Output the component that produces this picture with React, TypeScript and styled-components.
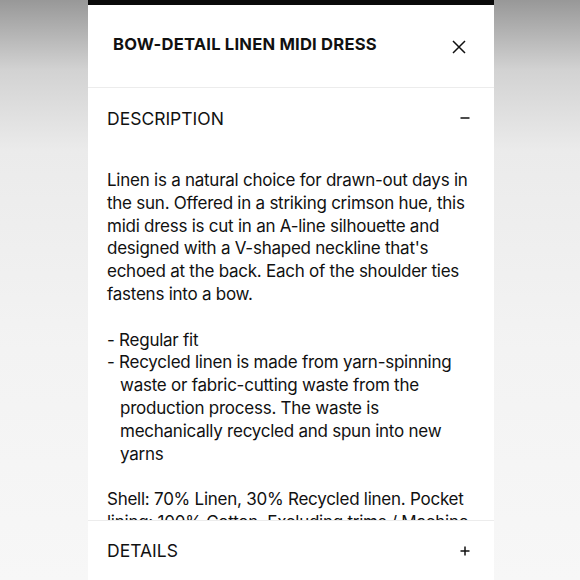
import React from "react";
import styled, { createGlobalStyle } from "styled-components";

const Global = createGlobalStyle`
  html, body { margin: 0; padding: 0; }
  body { font-family: Inter, "Noto Sans", sans-serif; color: #111; }
`;

const Page = styled.div`
  width: 580px;
  height: 580px;
  display: flex;
  justify-content: center;
  background: linear-gradient(180deg, #989898 0%, #d2d2d2 12%, #ebebeb 26%, #f3f3f3 60%, #f7f7f7 100%);
  overflow: hidden;
`;

const Panel = styled.div`
  width: 406px;
  margin-left: 2px;
  height: 580px;
  background: #fff;
  display: flex;
  flex-direction: column;
`;

const TopBar = styled.div`
  height: 5px;
  background: #0a0a0a;
  flex-shrink: 0;
`;

const Header = styled.div`
  height: 83px;
  flex-shrink: 0;
  display: flex;
  align-items: center;
  justify-content: space-between;
  padding: 0 28px 4px 25px;
  border-bottom: 1px solid #ececec;
  box-sizing: border-box;
`;

const Title = styled.h1`
  margin: 0;
  font-size: 16.6px;
  font-weight: 700;
  letter-spacing: 0.2px;
  color: #111;
`;

const IconButton = styled.button`
  border: 0;
  background: none;
  padding: 0;
  width: 14px;
  height: 14px;
  display: flex;
  align-items: center;
  justify-content: center;
  margin-top: 6px;
`;

const SectionHeader = styled.div<{ $border?: boolean }>`
  height: 60px;
  flex-shrink: 0;
  display: flex;
  align-items: center;
  justify-content: space-between;
  padding: 0 24px 0 19px;
  box-sizing: border-box;
  ${(p) => (p.$border ? "border-top: 1px solid #ececec;" : "")}
`;

const SectionTitle = styled.span`
  font-size: 17.5px;
  font-weight: 400;
  letter-spacing: 0;
  color: #111;
`;

const Body = styled.div`
  flex: 1;
  min-height: 0;
  overflow: hidden;
  padding: 21px 19px 0 19px;
  font-size: 17px;
  line-height: 22.8px;
  letter-spacing: -0.25px;
  color: #111;
`;

const Line = styled.div<{ $indent?: boolean }>`
  white-space: nowrap;
  padding-left: ${(p) => (p.$indent ? "13px" : "0")};
`;

const Gap = styled.div`
  height: 22.8px;
`;

const X = () => (
  <svg width="14" height="14" viewBox="0 0 14 14">
    <path d="M1 1 L13 13 M13 1 L1 13" stroke="#111" strokeWidth="1.5" fill="none" />
  </svg>
);
const Minus = () => (
  <svg width="10" height="10" viewBox="0 0 10 10">
    <path d="M0.5 5 H9.5" stroke="#111" strokeWidth="1.5" fill="none" />
  </svg>
);
const Plus = () => (
  <svg width="10" height="10" viewBox="0 0 10 10">
    <path d="M0.5 5 H9.5 M5 0.5 V9.5" stroke="#111" strokeWidth="1.5" fill="none" />
  </svg>
);

export default function App() {
  return (
    <>
      <Global />
      <Page>
        <Panel>
          <TopBar />
          <Header>
            <Title>BOW-DETAIL LINEN MIDI DRESS</Title>
            <IconButton aria-label="Close"><X /></IconButton>
          </Header>
          <SectionHeader>
            <SectionTitle>DESCRIPTION</SectionTitle>
            <Minus />
          </SectionHeader>
          <Body>
            <Line>Linen is a natural choice for drawn-out days in</Line>
            <Line>the sun. Offered in a striking crimson hue, this</Line>
            <Line>midi dress is cut in an A-line silhouette and</Line>
            <Line>designed with a V-shaped neckline that's</Line>
            <Line>echoed at the back. Each of the shoulder ties</Line>
            <Line>fastens into a bow.</Line>
            <Gap />
            <Line>- Regular fit</Line>
            <Line>- Recycled linen is made from yarn-spinning</Line>
            <Line $indent>waste or fabric-cutting waste from the</Line>
            <Line $indent>production process. The waste is</Line>
            <Line $indent>mechanically recycled and spun into new</Line>
            <Line $indent>yarns</Line>
            <Gap />
            <Line>Shell: 70% Linen, 30% Recycled linen. Pocket</Line>
            <Line>lining: 100% Cotton. Excluding trims / Machine</Line>
          </Body>
          <SectionHeader $border>
            <SectionTitle>DETAILS</SectionTitle>
            <Plus />
          </SectionHeader>
        </Panel>
      </Page>
    </>
  );
}
